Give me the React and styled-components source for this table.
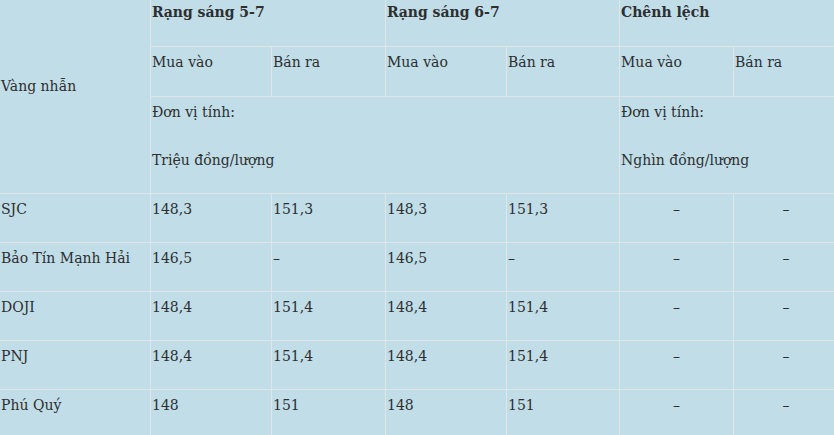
import styled, { createGlobalStyle } from 'styled-components';

const GlobalStyle = createGlobalStyle`
  html, body {
    margin: 0;
    padding: 0;
    background: #c1dde7;
    overflow: hidden;
  }
`;

const Frame = styled.div`
  width: 834px;
  height: 435px;
  overflow: hidden;
  background: #c1dde7;
`;

const Table = styled.table`
  border-collapse: collapse;
  table-layout: fixed;
  width: 839px;
  margin: -4px 0 0 -1px;
  font-family: "DejaVu Serif", "Liberation Serif", serif;
  font-size: 14px;
  color: #2d2f31;
`;

const Cell = styled.td`
  border: 1px solid #dee6e9;
  padding: 3px 1px 0;
  vertical-align: ${p => (p.$middle ? 'middle' : 'top')};
  text-align: ${p => (p.$center ? 'center' : 'left')};
  font-weight: ${p => (p.$bold ? 700 : 400)};
  line-height: 24px;
  height: ${p => p.$h}px;
  box-sizing: border-box;
  white-space: nowrap;
`;

const Line = styled.div`
  & + & {
    margin-top: 24px;
  }
`;

const Label = styled.div`
  padding-bottom: 22px;
`;

const rows = [
  ['SJC', '148,3', '151,3', '148,3', '151,3'],
  ['Bảo Tín Mạnh Hải', '146,5', '–', '146,5', '–'],
  ['DOJI', '148,4', '151,4', '148,4', '151,4'],
  ['PNJ', '148,4', '151,4', '148,4', '151,4'],
  ['Phú Quý', '148', '151', '148', '151'],
];

export default function App() {
  return (
    <Frame>
      <GlobalStyle />
      <Table>
        <colgroup>
          <col style={{ width: 151 }} />
          <col style={{ width: 121 }} />
          <col style={{ width: 114 }} />
          <col style={{ width: 121 }} />
          <col style={{ width: 113 }} />
          <col style={{ width: 114 }} />
          <col style={{ width: 105 }} />
        </colgroup>
        <tbody>
          <tr>
            <Cell rowSpan={3} $middle>
              <Label>Vàng nhẫn</Label>
            </Cell>
            <Cell colSpan={2} $bold $h={50}>Rạng sáng 5-7</Cell>
            <Cell colSpan={2} $bold $h={50}>Rạng sáng 6-7</Cell>
            <Cell colSpan={2} $bold $h={50}>Chênh lệch</Cell>
          </tr>
          <tr>
            <Cell $h={50}>Mua vào</Cell>
            <Cell $h={50}>Bán ra</Cell>
            <Cell $h={50}>Mua vào</Cell>
            <Cell $h={50}>Bán ra</Cell>
            <Cell $h={50}>Mua vào</Cell>
            <Cell $h={50}>Bán ra</Cell>
          </tr>
          <tr>
            <Cell colSpan={4} $h={97}>
              <Line>Đơn vị tính:</Line>
              <Line>Triệu đồng/lượng</Line>
            </Cell>
            <Cell colSpan={2} $h={97}>
              <Line>Đơn vị tính:</Line>
              <Line>Nghìn đồng/lượng</Line>
            </Cell>
          </tr>
          {rows.map(r => (
            <tr key={r[0]}>
              {r.map((v, i) => (
                <Cell key={i} $h={49}>{v}</Cell>
              ))}
              <Cell $center $h={49}>–</Cell>
              <Cell $center $h={49}>–</Cell>
            </tr>
          ))}
        </tbody>
      </Table>
    </Frame>
  );
}
